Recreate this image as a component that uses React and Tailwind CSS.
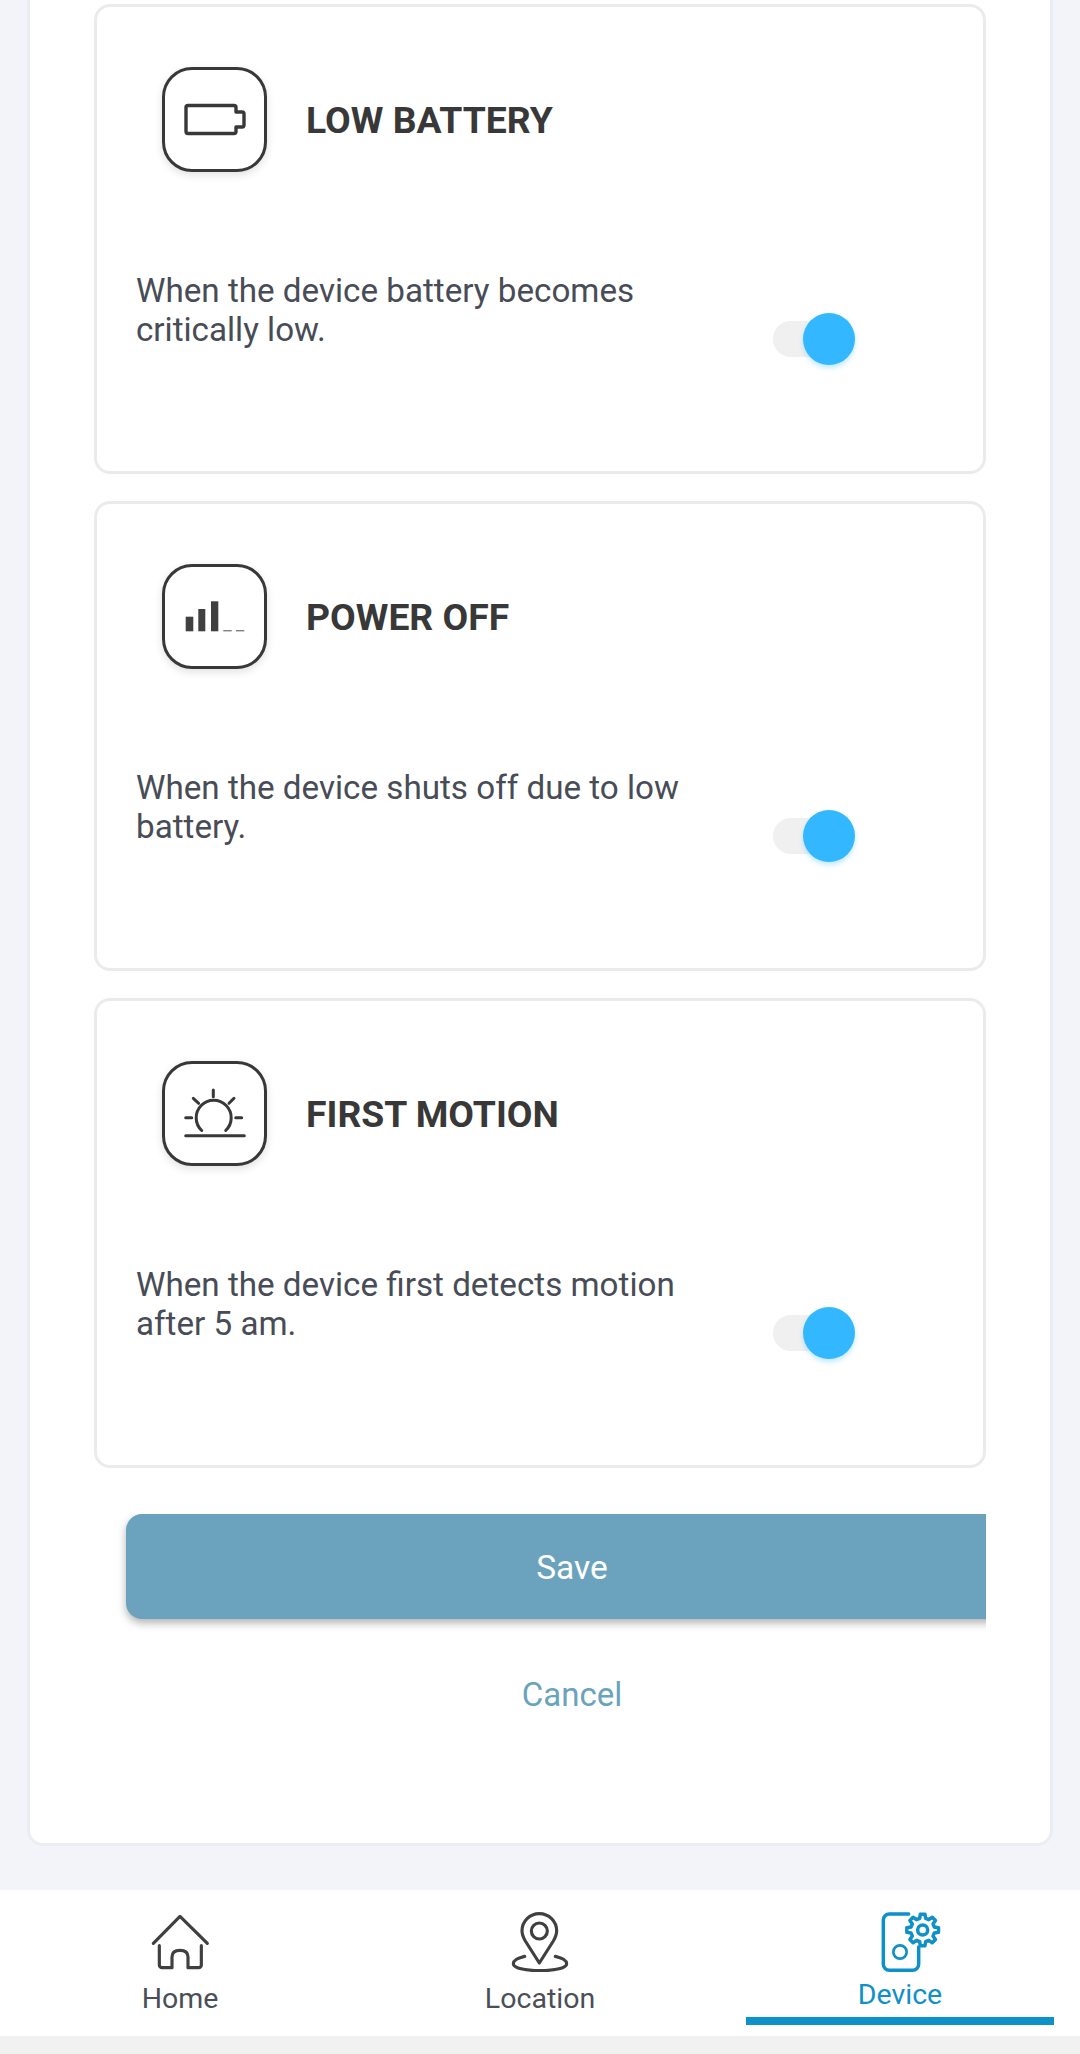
const gearPath = (() => {
  const cx = 218, cy = 119, teeth = 8, outer = 48, inner = 36;
  let d = "";
  for (let i = 0; i < teeth; i++) {
    const a = (i / teeth) * Math.PI * 2 - Math.PI / 2;
    const step = (Math.PI * 2) / teeth;
    const pts = [
      [inner, a - step * 0.32],
      [outer, a - step * 0.18],
      [outer, a + step * 0.18],
      [inner, a + step * 0.32],
    ];
    pts.forEach(([r, t], j) => {
      const x = (cx + r * Math.cos(t)).toFixed(1);
      const y = (cy + r * Math.sin(t)).toFixed(1);
      d += `${i === 0 && j === 0 ? "M" : "L"}${x} ${y}`;
    });
  }
  return d + "Z";
})();

function BatteryIcon() {
  return (
    <svg viewBox="0 0 99 99" className="w-[99px] h-[99px]" fill="none" stroke="#383838" strokeWidth="3.4">
      <path d="M23 35.5H69a2 2 0 0 1 2 2V42h6a2 2 0 0 1 2 2v11a2 2 0 0 1-2 2h-6v4.5a2 2 0 0 1-2 2H23a2 2 0 0 1-2-2v-24a2 2 0 0 1 2-2z" strokeLinejoin="round" />
    </svg>
  );
}

function SignalIcon() {
  return (
    <svg viewBox="0 0 99 99" className="w-[99px] h-[99px]">
      <rect x="20.7" y="49.7" width="7.6" height="14.6" fill="#404040" />
      <rect x="33.3" y="42" width="7" height="22.3" fill="#404040" />
      <rect x="46" y="34.3" width="7.3" height="30" fill="#404040" />
      <rect x="58.3" y="63" width="8.4" height="1.4" fill="#808080" />
      <rect x="71" y="63" width="8.4" height="1.4" fill="#808080" />
    </svg>
  );
}

function SunIcon() {
  return (
    <svg viewBox="0 0 99 99" className="w-[99px] h-[99px]" fill="none" stroke="#383838" strokeWidth="3" strokeLinecap="round">
      <path d="M36.7 66.5A17.5 17.5 0 1 1 60.7 66.5" />
      <path d="M48.3 26v6.7M28.3 34.3l5.4 5M69 34.3l-5 5M20.7 53.7h6M70.7 53.7h6M20.7 71.7h58.6" />
    </svg>
  );
}

function HomeIcon() {
  return (
    <svg viewBox="60 65 180 180" className="w-[60px] h-[60px]" fill="none" stroke="#404040" strokeWidth="9.5" strokeLinecap="round" strokeLinejoin="round">
      <path d="M70 159L150 78L232 159" />
      <path d="M88 166V224a8 8 0 0 0 8 8H126V200c0-14 10-20 24-20s24 6 24 20V232H206a8 8 0 0 0 8-8V166" />
    </svg>
  );
}

function LocationIcon() {
  return (
    <svg viewBox="60 65 180 180" className="w-[60px] h-[60px]" fill="none" stroke="#404040" strokeWidth="9.5" strokeLinecap="round" strokeLinejoin="round">
      <path d="M148 218L106 152C98 138 96 130 96 122A52 52 0 0 1 200 122C200 130 198 138 190 152Z" />
      <circle cx="148" cy="122" r="24" />
      <path d="M104 198C82 203 70 211 70 220C70 233 105 241 150 241C195 241 230 233 230 220C230 211 218 203 196 198" />
    </svg>
  );
}

function DeviceIcon() {
  return (
    <svg viewBox="60 65 180 180" className="w-[60px] h-[60px] overflow-visible" fill="none" stroke="#0e90c8" strokeWidth="10.5" strokeLinecap="round" strokeLinejoin="round">
      <path d="M176 71H118a18 18 0 0 0-18 18V222a18 18 0 0 0 18 18h70a18 18 0 0 0 18-18V170" />
      <circle cx="150" cy="185" r="20" strokeWidth="8" />
      <path d={gearPath} />
      <circle cx="218" cy="119" r="15" />
    </svg>
  );
}

function Toggle() {
  return (
    <div className="relative w-[72px] h-[36px] mt-[50px] shrink-0 rounded-full bg-[#f0f0f0]">
      <div className="absolute left-[30px] -top-[8px] w-[52px] h-[52px] rounded-full bg-[#33b7ff] shadow-[0_3px_5px_rgba(51,183,255,0.3)]" />
    </div>
  );
}

function AlertCard({ icon, title, lineA, lineB }) {
  return (
    <div className="h-[470px] rounded-2xl border-[3px] border-[#ebebeb] bg-white pt-[60px]">
      <div className="flex items-center pl-[65px]">
        <div className="w-[105px] h-[105px] rounded-[30px] border-[3px] border-[#383838] bg-white shadow-[0_3px_8px_rgba(0,0,0,0.12)] shrink-0">
          {icon}
        </div>
        <div className="ml-[39px] mt-[2px] text-[37.3px] font-bold text-[#383838]">{title}</div>
      </div>
      <div className="flex mt-[99px] pl-[39px]">
        <p className="w-[570px] mr-[67px] text-[33.2px] leading-[39px] text-[#474c56]">
          {lineA} {lineB}
        </p>
        <Toggle />
      </div>
    </div>
  );
}

function NavItem({ icon, label, active }) {
  return (
    <div className="w-[360px] flex flex-col items-center pt-[22px]">
      {icon}
      <div className={active ? "mt-[6px] text-[28.5px] leading-[34px] text-[#0e90c8]" : "mt-[10px] text-[28.5px] leading-[34px] text-[#4a4f57]"}>
        {label}
      </div>
      {active && <div className="w-[308px] h-[8px] mt-[5px] bg-[#0e90c8]" />}
    </div>
  );
}

export default function App() {
  return (
    <div className="w-[1080px] h-[2054px] flex flex-col overflow-hidden bg-[#f2f4f9] font-['Roboto',sans-serif]">
      <div className="h-[1890px] shrink-0 px-[27px]">
        <div className="h-[1846px] rounded-b-2xl border-x-[3px] border-b-[3px] border-[#ebedf2] bg-white pt-[4px] px-[64px]">
          <div className="flex flex-col gap-[27px]">
            <AlertCard icon={<BatteryIcon />} title="LOW BATTERY" lineA="When the device battery becomes" lineB="critically low." />
            <AlertCard icon={<SignalIcon />} title="POWER OFF" lineA="When the device shuts off due to low" lineB="battery." />
            <AlertCard icon={<SunIcon />} title="FIRST MOTION" lineA="When the device first detects motion" lineB="after 5 am." />
          </div>
          <div className="mt-[46px] w-[892px] overflow-hidden pb-[20px]">
            <div className="ml-[32px] w-[892px] h-[105px] pt-[3px] rounded-2xl bg-[#6ba3be] shadow-[0_4px_8px_rgba(0,0,0,0.3)] flex items-center justify-center text-[33.5px] text-white">
              Save
            </div>
          </div>
          <div className="mt-[36px] ml-[32px] w-[892px] text-center text-[33px] leading-[40px] text-[#6ba3be]">Cancel</div>
        </div>
      </div>
      <div className="h-[146px] shrink-0 flex bg-white">
        <NavItem icon={<HomeIcon />} label="Home" />
        <NavItem icon={<LocationIcon />} label="Location" />
        <NavItem icon={<DeviceIcon />} label="Device" active />
      </div>
      <div className="flex-1 bg-[#f1f1f1]" />
    </div>
  );
}
